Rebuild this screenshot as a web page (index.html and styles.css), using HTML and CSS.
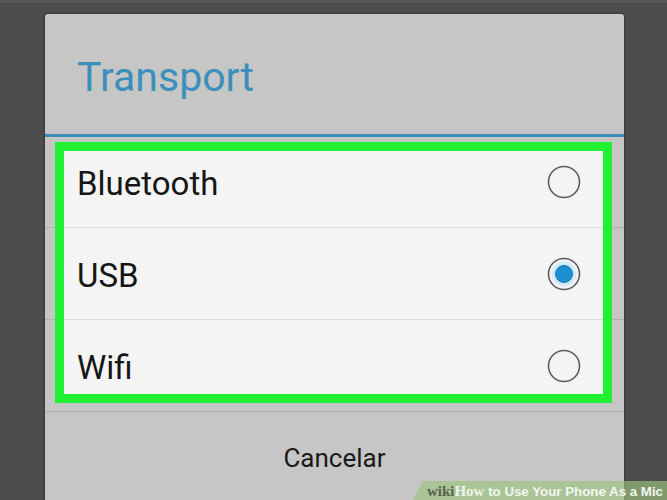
FILE: index.html
```html
<!DOCTYPE html>
<html lang="es">
<head>
    <meta charset="UTF-8">
    <meta name="viewport" content="width=device-width, initial-scale=1.0">
    <title>Transport</title>
    <link rel="stylesheet" href="styles.css">
</head>
<body>
    <div class="screen">
        <div class="dialog">
            <div class="dialog-title">Transport</div>
            <div class="options">
                <div class="highlight"></div>
                <div class="option">
                    <span>Bluetooth</span>
                    <svg class="radio" width="36" height="36" viewBox="0 0 36 36">
                        <circle cx="18" cy="18" r="15.5" fill="none" stroke="#5c5c5c" stroke-width="1.6"/>
                    </svg>
                </div>
                <div class="option">
                    <span>USB</span>
                    <svg class="radio" width="36" height="36" viewBox="0 0 36 36">
                        <circle cx="18" cy="18" r="15.5" fill="none" stroke="#5c5c5c" stroke-width="1.6"/>
                        <circle cx="18" cy="18" r="12.5" fill="#d3ebf7"/>
                        <circle cx="18" cy="18" r="8.5" fill="#1b8fcf" stroke="#1477b0" stroke-width="1"/>
                    </svg>
                </div>
                <div class="option">
                    <span>Wifi</span>
                    <svg class="radio" width="36" height="36" viewBox="0 0 36 36">
                        <circle cx="18" cy="18" r="15.5" fill="none" stroke="#5c5c5c" stroke-width="1.6"/>
                    </svg>
                </div>
            </div>
            <div class="dialog-button">Cancelar</div>
        </div>
    </div>

    <div class="watermark">
        <span class="wiki">wiki</span><span class="how">How</span> to Use Your Phone As a Mic
    </div>
</body>
</html>
```

FILE: styles.css
```css
body {
    margin: 0;
    width: 667px;
    height: 500px;
    overflow: hidden;
    background-color: #4d4d4d;
    font-family: Roboto, "Noto Sans", sans-serif;
    position: relative;
}
.screen {
    padding-top: 14px;
    border-top: 3px solid #555;
    box-sizing: border-box;
    height: 500px;
}
.dialog {
    margin-top: -3px;
    margin-left: 45px;
    width: 579px;
    height: 490px;
    background-color: #c6c6c6;
    border-radius: 3px 3px 0 0;
    box-shadow: 0 0 3px rgba(0, 0, 0, 0.55);
}
.dialog-title {
    height: 123px;
    box-sizing: border-box;
    padding-left: 32px;
    padding-top: 39px;
    font-size: 41px;
    line-height: 48px;
    color: #3a90bb;
    border-bottom: 3px solid #3a8dba;
}
.options {
    position: relative;
}
.highlight {
    position: absolute;
    left: 10px;
    top: 5px;
    width: 557px;
    height: 261px;
}
.highlight::before {
    content: "";
    position: absolute;
    inset: 0;
    background-color: #f4f4f4;
    z-index: 0;
}
.highlight::after {
    content: "";
    position: absolute;
    inset: 0;
    border: 9px solid #22f034;
    z-index: 2;
}
.option {
    position: relative;
    z-index: 1;
    height: 91px;
    display: flex;
    align-items: center;
    justify-content: space-between;
    padding: 0 42px 0 32px;
    border-bottom: 1px solid rgba(0, 0, 0, 0.1);
    font-size: 33px;
    color: #161616;
}
.option span {
    margin-top: 3px;
}
.option:nth-of-type(2) {
    height: 90px;
}
.radio {
    display: block;
}
.dialog-button {
    text-align: center;
    padding-top: 31px;
    font-size: 26px;
    color: #1a1a1a;
}
.watermark {
    position: absolute;
    right: 0;
    bottom: 0;
    height: 19px;
    padding: 0 4px 0 14px;
    background-color: rgba(155, 195, 128, 0.65);
    clip-path: polygon(10px 0, 100% 0, 100% 100%, 0 100%);
    font-family: "Liberation Sans", Arial, sans-serif;
    font-weight: bold;
    font-size: 13.3px;
    line-height: 21px;
    color: #f2f6ef;
    white-space: nowrap;
}
.watermark .wiki,
.watermark .how {
    font-family: "Liberation Serif", "Times New Roman", serif;
    font-size: 15px;
}
.watermark .wiki {
    color: #56644c;
}
.watermark .how {
    color: #eef5e8;
}
```
